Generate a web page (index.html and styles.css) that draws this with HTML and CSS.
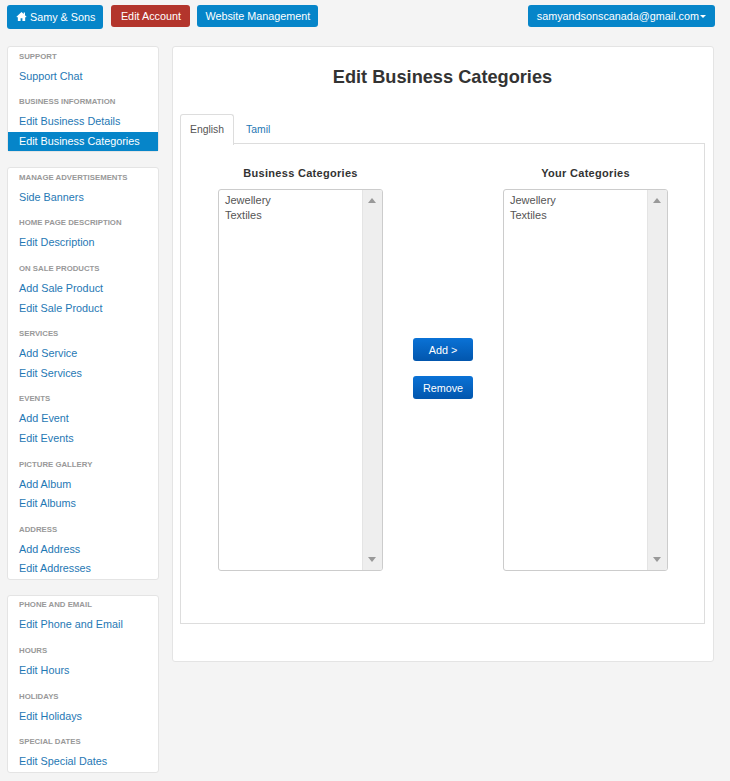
FILE: index.html
```html
<!DOCTYPE html>
<html lang="en">
<head>
    <meta charset="UTF-8">
    <title>Edit Business Categories</title>
    <link rel="stylesheet" href="styles.css">
</head>
<body>
    <div class="topbar">
        <a class="btn btn-brand" href="#">
            <svg class="home-icon" viewBox="0 0 12 12" width="11" height="11"><path d="M6 1 0.5 6.2 1.3 7 2 6.4V11H5V7.8H7V11H10V6.4L10.7 7 11.5 6.2 9.8 4.6V1.6H8.4V3.3Z" fill="#fff"/></svg>
            Samy &amp; Sons
        </a>
        <a class="btn btn-red" href="#">Edit Account</a>
        <a class="btn btn-site" href="#">Website Management</a>
        <a class="btn btn-user" href="#">samyandsonscanada@gmail.com<span class="caret"></span></a>
    </div>

    <div class="page">
        <div class="sidebar">
            <div class="panel">
                <h4>Support</h4>
                <a href="#">Support Chat</a>
                <h4>Business Information</h4>
                <a href="#">Edit Business Details</a>
                <a class="active" href="#">Edit Business Categories</a>
            </div>
            <div class="panel">
                <h4>Manage Advertisements</h4>
                <a href="#">Side Banners</a>
                <h4>Home Page Description</h4>
                <a href="#">Edit Description</a>
                <h4>On Sale Products</h4>
                <a href="#">Add Sale Product</a>
                <a href="#">Edit Sale Product</a>
                <h4>Services</h4>
                <a href="#">Add Service</a>
                <a href="#">Edit Services</a>
                <h4>Events</h4>
                <a href="#">Add Event</a>
                <a href="#">Edit Events</a>
                <h4>Picture Gallery</h4>
                <a href="#">Add Album</a>
                <a href="#">Edit Albums</a>
                <h4>Address</h4>
                <a href="#">Add Address</a>
                <a href="#">Edit Addresses</a>
            </div>
            <div class="panel">
                <h4>Phone and Email</h4>
                <a href="#">Edit Phone and Email</a>
                <h4>Hours</h4>
                <a href="#">Edit Hours</a>
                <h4>Holidays</h4>
                <a href="#">Edit Holidays</a>
                <h4>Special Dates</h4>
                <a href="#">Edit Special Dates</a>
            </div>
        </div>

        <div class="main">
            <h1>Edit Business Categories</h1>
            <div class="tabs">
                <a class="tab current" href="#">English</a>
                <a class="tab" href="#">Tamil</a>
            </div>
            <div class="tab-content">
                <div class="col">
                    <h5>Business Categories</h5>
                    <div class="listbox">
                        <ul>
                            <li>Jewellery</li>
                            <li>Textiles</li>
                        </ul>
                        <div class="scroll"><span class="arrow-up"></span><span class="arrow-down"></span></div>
                    </div>
                </div>
                <div class="actions">
                    <button type="button">Add &gt;</button>
                    <button type="button">Remove</button>
                </div>
                <div class="col">
                    <h5>Your Categories</h5>
                    <div class="listbox">
                        <ul>
                            <li>Jewellery</li>
                            <li>Textiles</li>
                        </ul>
                        <div class="scroll"><span class="arrow-up"></span><span class="arrow-down"></span></div>
                    </div>
                </div>
            </div>
        </div>
    </div>
</body>
</html>
```

FILE: styles.css
```css
body {
    font-family: "Liberation Sans", Arial, sans-serif;
    font-size: 12px;
    background-color: #f4f4f4;
    margin: 0;
    padding: 0;
    color: #333;
}
a {
    text-decoration: none;
}
.topbar {
    display: flex;
    align-items: flex-start;
    gap: 7px;
    padding: 5px 15px 0 7px;
    height: 46px;
    box-sizing: border-box;
}
.btn {
    display: block;
    height: 22px;
    line-height: 22px;
    padding: 0 9px;
    background-color: #0685c9;
    color: #fff;
    border-radius: 3px;
    font-size: 10.8px;
}
.btn-brand {
    height: 24px;
    line-height: 25px;
    margin-right: 1px;
    padding-right: 8px;
}
.btn-red {
    background-color: #b3352c;
    padding: 0 9.5px;
}
.btn-site {
    padding: 0 8px;
}
.btn-user {
    margin-left: auto;
}
.home-icon {
    vertical-align: -1px;
}
.caret {
    display: inline-block;
    width: 0;
    height: 0;
    margin-left: 1px;
    vertical-align: 2px;
    border-left: 3px solid transparent;
    border-right: 3px solid transparent;
    border-top: 3px solid #fff;
}
.page {
    display: flex;
    align-items: flex-start;
    gap: 13px;
    padding: 0 16px 0 7px;
}
.sidebar {
    width: 152px;
    flex-shrink: 0;
}
.panel {
    background-color: #fff;
    border: 1px solid #e4e4e4;
    border-radius: 3px;
    padding-top: 1.5px;
    margin-bottom: 15px;
}
.panel h4 {
    margin: 8px 0 2px 11px;
    height: 16px;
    line-height: 16px;
    font-size: 7.8px;
    font-weight: bold;
    color: #999;
    text-transform: uppercase;
}
.panel h4:first-child {
    margin-top: 0;
}
.panel a {
    display: block;
    height: 19.6px;
    line-height: 19.6px;
    padding-left: 11px;
    font-size: 10.8px;
    color: #1f78b4;
}
.panel a.active {
    background-color: #0685c9;
    color: #fff;
}
.main {
    flex: 1;
    height: 616px;
    box-sizing: border-box;
    background-color: #fff;
    border: 1px solid #e4e4e4;
    border-radius: 3px;
    padding: 0 8px 0 7px;
}
h1 {
    margin: 19px 0 26px;
    height: 22px;
    line-height: 22px;
    text-align: center;
    font-size: 18.2px;
    color: #333;
}
.tabs {
    display: flex;
    height: 30px;
    position: relative;
    z-index: 1;
}
.tab {
    padding: 0 9px;
    margin-right: 2px;
    line-height: 29px;
    font-size: 10.4px;
    color: #1f78b4;
    border: 1px solid transparent;
    border-bottom: none;
}
.tab.current {
    background-color: #fff;
    color: #555;
    border-color: #ddd;
    border-radius: 3px 3px 0 0;
    height: 30px;
}
.tab-content {
    display: flex;
    justify-content: space-between;
    align-items: flex-start;
    height: 481px;
    box-sizing: border-box;
    margin-top: -1px;
    border: 1px solid #ddd;
    padding: 0 36px 0 37px;
}
.col {
    width: 165px;
}
h5 {
    margin: 22px 0 9px;
    height: 14px;
    line-height: 14px;
    text-align: center;
    font-size: 11px;
    letter-spacing: 0.3px;
    color: #333;
}
.listbox {
    display: flex;
    height: 382px;
    box-sizing: border-box;
    border: 1px solid #ccc;
    border-radius: 3px;
    overflow: hidden;
}
.listbox ul {
    flex: 1;
    margin: 0;
    padding: 3px 6px;
    list-style: none;
}
.listbox li {
    height: 15px;
    line-height: 15px;
    font-size: 11px;
    color: #555;
}
.scroll {
    display: flex;
    flex-direction: column;
    justify-content: space-between;
    align-items: center;
    width: 20px;
    box-sizing: border-box;
    padding: 8px 1px 8px 0;
    background-color: #eee;
    border-left: 1px solid #e4e4e4;
}
.arrow-up, .arrow-down {
    width: 0;
    height: 0;
    border-left: 4px solid transparent;
    border-right: 4px solid transparent;
}
.arrow-up {
    border-bottom: 5px solid #999;
}
.arrow-down {
    border-top: 5px solid #999;
}
.actions {
    display: flex;
    flex-direction: column;
    gap: 15px;
    margin-top: 194px;
}
button {
    width: 60px;
    height: 23px;
    padding: 0;
    background: linear-gradient(#0a72d6, #0256ad);
    color: #fff;
    border: none;
    border-radius: 3px;
    font-family: inherit;
    font-size: 10.8px;
    cursor: pointer;
}
```
